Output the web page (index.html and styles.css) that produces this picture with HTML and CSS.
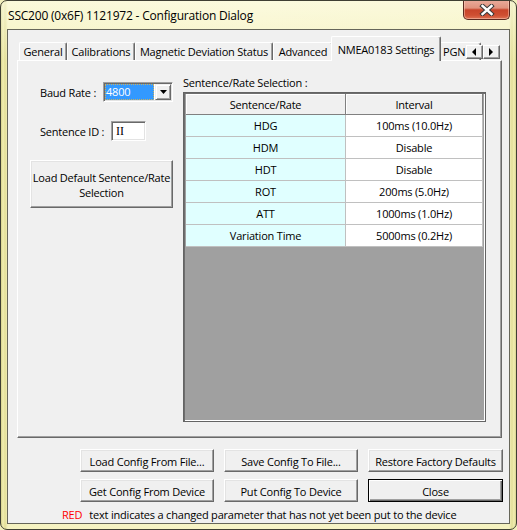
FILE: index.html
```html
<!DOCTYPE html>
<html>
<head>
<meta charset="utf-8">
<title>Configuration Dialog</title>
<link rel="stylesheet" href="styles.css">
</head>
<body>
<div class="window">
  <div class="titlebar">
    <span class="title">SSC200 (0x6F) 1121972 - Configuration Dialog</span>
    <div class="closebtn">
      <svg width="16" height="12" viewBox="0 0 16 12"><path d="M3.5 2 L12.5 10 M12.5 2 L3.5 10" stroke="#3a3a3a" stroke-width="4.4" stroke-linecap="square" fill="none"/><path d="M3.5 2 L12.5 10 M12.5 2 L3.5 10" stroke="#ffffff" stroke-width="2.4" stroke-linecap="square" fill="none"/></svg>
    </div>
  </div>
  <div class="client">
    <div class="tabs">
      <div class="tab w-general">General</div>
      <div class="tab w-cal">Calibrations</div>
      <div class="tab w-mag">Magnetic Deviation Status</div>
      <div class="tab w-adv">Advanced</div>
      <div class="tab sel">NMEA0183 Settings</div>
      <div class="tab w-pgn">PGN Information</div>
      <div class="scroller">
        <div class="sbtn"><svg width="5" height="8" viewBox="0 0 5 8"><path d="M4 0 L0 4 L4 8 Z" fill="#000"/></svg></div>
        <div class="sbtn"><svg width="5" height="8" viewBox="0 0 5 8"><path d="M0 0 L4 4 L0 8 Z" fill="#000"/></svg></div>
      </div>
    </div>
    <div class="pane">
      <div class="leftcol">
        <div class="field">
          <span class="lbl lbl-baud">Baud Rate :</span>
          <div class="combo">
            <div class="combo-val"><span>4800</span></div>
            <div class="combo-dd"><svg width="7" height="4" viewBox="0 0 7 4"><path d="M0 0 L7 0 L3.5 4 Z" fill="#000"/></svg></div>
          </div>
        </div>
        <div class="field field-sid">
          <span class="lbl lbl-sid">Sentence ID :</span>
          <div class="textbox">II</div>
        </div>
        <div class="btn btn-default"><span class="bl">Load Default Sentence/Rate</span><span class="bl">Selection</span></div>
      </div>
      <div class="rightcol">
        <div class="caption">Sentence/Rate Selection :</div>
        <div class="grid">
          <div class="grow ghead"><div class="gc c1">Sentence/Rate</div><div class="gc c2">Interval</div></div>
          <div class="grow"><div class="gc c1">HDG</div><div class="gc c2">100ms (10.0Hz)</div></div>
          <div class="grow"><div class="gc c1">HDM</div><div class="gc c2">Disable</div></div>
          <div class="grow"><div class="gc c1">HDT</div><div class="gc c2">Disable</div></div>
          <div class="grow"><div class="gc c1">ROT</div><div class="gc c2">200ms (5.0Hz)</div></div>
          <div class="grow"><div class="gc c1">ATT</div><div class="gc c2">1000ms (1.0Hz)</div></div>
          <div class="grow"><div class="gc c1">Variation Time</div><div class="gc c2">5000ms (0.2Hz)</div></div>
        </div>
      </div>
    </div>
    <div class="buttons">
      <div class="btn">Load Config From File...</div>
      <div class="btn">Save Config To File...</div>
      <div class="btn">Restore Factory Defaults</div>
      <div class="btn">Get Config From Device</div>
      <div class="btn">Put Config To Device</div>
      <div class="btn btn-close">Close</div>
    </div>
    <div class="note"><span class="red">RED</span><span class="note-text">text indicates a changed parameter that has not yet been put to the device</span></div>
  </div>
</div>
</body>
</html>
```
FILE: styles.css
```css
* { box-sizing: border-box; }
html, body { margin: 0; padding: 0; }
body {
  width: 517px;
  height: 530px;
  overflow: hidden;
  background: #f2efbc;
  font-family: "Open Sans", "Noto Sans", sans-serif;
  font-size: 11px;
  letter-spacing: -0.2px;
  color: #000;
}
.window {
  width: 517px;
  height: 530px;
  border: 1px solid #3f3f33;
  border-radius: 7px;
  background:
    linear-gradient(180deg, rgba(255,255,240,0.55) 0, rgba(255,255,240,0.25) 30px, rgba(255,255,255,0) 60px),
    linear-gradient(90deg, #d6d28c 0, #f1eeb2 2px, #e2de98 4px, #f5f2c0 7px, #f7f4c8 50%, #f5f2c0 calc(100% - 7px), #e2de98 calc(100% - 4px), #f1eeb2 calc(100% - 2px), #d6d28c 100%);
  display: flex;
  flex-direction: column;
  overflow: hidden;
}
.titlebar {
  height: 29px;
  flex: none;
  display: flex;
  justify-content: space-between;
  align-items: flex-start;
  padding-left: 7px;
}
.title {
  font-size: 12px;
  line-height: 16px;
  margin-top: 7px;
  white-space: nowrap;
}
.closebtn {
  width: 47px;
  height: 20px;
  margin-top: -1px;
  margin-right: 6px;
  border: 1px solid #5a2a20;
  border-top: none;
  border-radius: 0 0 5px 5px;
  background: linear-gradient(180deg, #e9ac9c 0%, #e0937e 42%, #c8442a 52%, #cf4f32 80%, #de7254 100%);
  box-shadow: inset 0 0 0 1px rgba(255,220,200,0.45);
  display: flex;
  align-items: center;
  justify-content: center;
}
.client {
  flex: 1;
  margin: 0 7px 8px 7px;
  background: #f0f0f0;
  box-shadow: 0 0 0 1px #66665a;
  padding: 6px 7px 0 9px;
  display: flex;
  flex-direction: column;
}
.tabs {
  height: 24px;
  flex: none;
  display: flex;
  align-items: flex-end;
  position: relative;
  padding-left: 2px;
}
.tab {
  height: 18px;
  flex: none;
  background: #f0f0f0;
  border-top: 1px solid #ffffff;
  border-left: 1px solid #ffffff;
  border-right: 1px solid #696969;
  box-shadow: inset -1px 0 #a0a0a0;
  border-radius: 2px 2px 0 0;
  text-align: center;
  line-height: 18px;
  white-space: nowrap;
  overflow: hidden;
}
.w-general { width: 48px; }
.w-cal { width: 68px; }
.w-mag { width: 138px; }
.w-adv { width: 60px; }
.tab.sel {
  width: 110px;
  height: 25px;
  margin: 0 -2px -1px -2px;
  position: relative;
  z-index: 2;
  padding-top: 2px;
  line-height: 22px;
}
.w-pgn { width: 42px; text-align: left; padding-left: 3px; }
.scroller {
  position: absolute;
  right: 2px;
  top: 9px;
  display: flex;
  background: #f0f0f0;
  z-index: 3;
}
.sbtn {
  width: 17px;
  height: 14px;
  background: #f0f0f0;
  border: 1px solid;
  border-color: #ffffff #696969 #696969 #ffffff;
  box-shadow: inset -1px -1px #a0a0a0;
  display: flex;
  align-items: center;
  justify-content: center;
}
.pane {
  height: 378px;
  flex: none;
  border: 1px solid;
  border-color: #ffffff #696969 #696969 #ffffff;
  box-shadow: inset -1px -1px #a0a0a0;
  padding: 14px 0 0 12px;
  display: flex;
  align-items: flex-start;
}
.leftcol {
  width: 143px;
  flex: none;
  margin-top: 7px;
  display: flex;
  flex-direction: column;
}
.field {
  height: 20px;
  display: flex;
  align-items: center;
  padding-left: 10px;
}
.field-sid { margin-top: 19px; }
.lbl { flex: none; white-space: nowrap; }
.lbl-baud { width: 63px; }
.lbl-sid { width: 71px; }
.combo {
  width: 70px;
  height: 20px;
  background: #fff;
  border: 1px solid;
  border-color: #a0a0a0 #ffffff #ffffff #a0a0a0;
  box-shadow: inset 1px 1px #696969, inset -1px -1px #e3e3e3;
  padding: 1px;
  display: flex;
  gap: 1px;
}
.combo-val {
  flex: 1;
  background: #3399ff;
  color: #fff;
  outline: 1px dotted #c8b060;
  outline-offset: -1px;
  line-height: 16px;
  padding-left: 1px;
}
.combo-dd {
  width: 16px;
  background: #f0f0f0;
  border: 1px solid;
  border-color: #f0f0f0 #696969 #696969 #f0f0f0;
  box-shadow: inset 1px 1px #fff, inset -1px -1px #a0a0a0;
  display: flex;
  align-items: center;
  justify-content: center;
}
.textbox {
  width: 35px;
  height: 20px;
  background: #fff;
  border: 1px solid;
  border-color: #a0a0a0 #ffffff #ffffff #a0a0a0;
  box-shadow: inset 1px 1px #696969, inset -1px -1px #e3e3e3;
  font-family: "Liberation Serif", serif;
  font-size: 12px;
  letter-spacing: 0;
  line-height: 18px;
  padding-left: 4px;
}
.btn {
  background: #f0f0f0;
  border: 1px solid;
  border-color: #ffffff #696969 #696969 #ffffff;
  box-shadow: inset -1px -1px #a0a0a0, inset 1px 1px #e3e3e3;
  display: flex;
  align-items: center;
  justify-content: center;
  text-align: center;
  white-space: nowrap;
  padding-top: 1px;
}
.btn-default {
  margin-top: 19px;
  height: 48px;
  flex-direction: column;
}
.bl {
  display: block;
  height: 15px;
  line-height: 15px;
}
.rightcol {
  width: 303px;
  flex: none;
  margin-left: 10px;
}
.caption {
  line-height: 15px;
  height: 14px;
  white-space: nowrap;
}
.grid {
  margin-top: 3px;
  width: 303px;
  height: 330px;
  background: #a0a0a0;
  border: 1px solid #646464;
  box-shadow: inset 1px 1px #6e6e6e, inset -1px -1px #ffffff;
  padding: 1px 2px 2px 2px;
}
.grow {
  display: flex;
  height: 22px;
}
.gc {
  height: 22px;
  border-bottom: 1px solid #c0c0c0;
  border-right: 1px solid #c0c0c0;
  text-align: center;
  line-height: 22px;
  white-space: nowrap;
}
.c1 { width: 160px; background: #e0ffff; }
.c2 { flex: 1; background: #ffffff; }
.ghead { height: 21px; }
.ghead .gc {
  height: 21px;
  line-height: 21px;
  background: #f0f0f0;
  box-shadow: inset 1px 1px #ffffff;
  border-bottom: 1px solid #808080;
  border-right: 1px solid #808080;
}
.buttons {
  flex: none;
  margin-top: 11px;
  margin-left: 63px;
  display: grid;
  grid-template-columns: 134px 134px 135px;
  grid-auto-rows: 23px;
  column-gap: 10px;
  row-gap: 7px;
}
.btn-close {
  border: 1px solid #000;
  box-shadow: inset 1px 1px #ffffff, inset -1px -1px #696969, inset -2px -2px #a0a0a0;
}
.note {
  flex: none;
  margin-top: 5px;
  margin-left: 45px;
  line-height: 16px;
  white-space: nowrap;
}
.red { color: #ff0000; margin-right: 7px; }
```
